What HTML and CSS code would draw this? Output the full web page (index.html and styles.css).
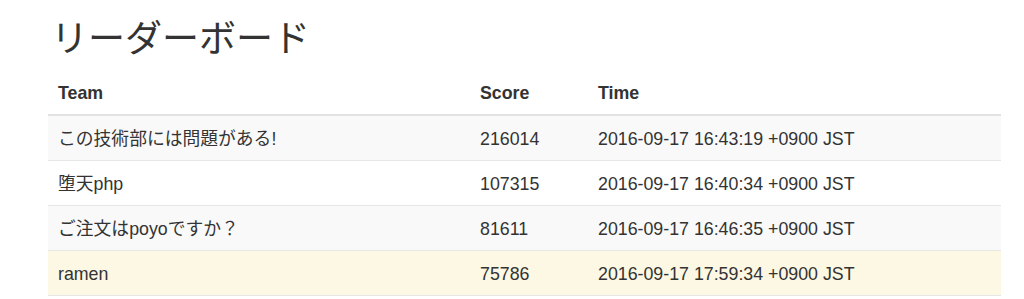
FILE: index.html
```html
<!DOCTYPE html>
<html lang="ja">
<head>
<meta charset="utf-8">
<title>リーダーボード</title>
<link rel="stylesheet" href="styles.css">
</head>
<body>
<div class="container">
  <h1 class="title">リーダーボード</h1>
  <table class="board">
    <thead>
      <tr><th class="col-team">Team</th><th class="col-score">Score</th><th>Time</th></tr>
    </thead>
    <tbody>
      <tr><td>この技術部には問題がある!</td><td>216014</td><td>2016-09-17 16:43:19 +0900 JST</td></tr>
      <tr><td>堕天php</td><td>107315</td><td>2016-09-17 16:40:34 +0900 JST</td></tr>
      <tr><td>ご注文はpoyoですか？</td><td>81611</td><td>2016-09-17 16:46:35 +0900 JST</td></tr>
      <tr class="warning"><td>ramen</td><td>75786</td><td>2016-09-17 17:59:34 +0900 JST</td></tr>
    </tbody>
  </table>
</div>
</body>
</html>
```

FILE: styles.css
```css
html, body {
  margin: 0;
  padding: 0;
  background: #ffffff;
}
body {
  font-family: "Liberation Sans", "Noto Sans CJK JP", sans-serif;
  color: #333333;
  font-size: 17.8px;
}
.container {
  padding-left: 48px;
  width: 953px;
}
.title {
  font-family: "Noto Sans CJK JP", sans-serif;
  font-weight: 400;
  font-size: 37px;
  line-height: 48px;
  margin: 12px 0 10px 3px;
  color: #333333;
}
.board {
  width: 953px;
  border-collapse: collapse;
  border-spacing: 0;
}
.board th,
.board td {
  padding: 11px 10px 9px;
  line-height: 24px;
  text-align: left;
  vertical-align: top;
}
.board th {
  font-weight: 700;
  border-bottom: 2px solid #e2e2e2;
}
.board td {
  border-top: 1px solid #e6e6e6;
}
.board tbody tr:first-child td {
  border-top: 0;
}
.board tbody tr:last-child td {
  border-bottom: 1px solid #e6e6e6;
}
.col-team { width: 402px; }
.col-score { width: 98px; }
.board tbody tr:nth-child(odd) td {
  background: #f9f9f9;
}
.board tbody tr.warning td {
  background: #fcf8e3;
}
```
